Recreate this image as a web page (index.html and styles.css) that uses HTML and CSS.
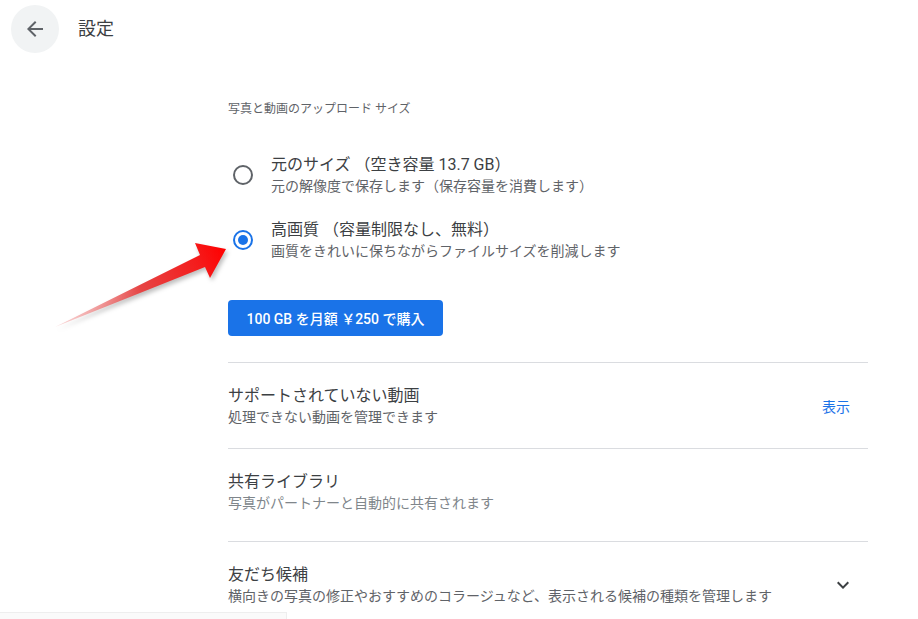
FILE: index.html
```html
<!DOCTYPE html>
<html lang="ja">
<head>
<meta charset="utf-8">
<title>設定</title>
<link rel="stylesheet" href="styles.css">
</head>
<body>
<header class="topbar">
  <button class="back" aria-label="戻る">
    <svg viewBox="0 0 24 24" width="24" height="24"><path d="M20 11H7.83l5.59-5.59L12 4l-8 8 8 8 1.41-1.41L7.83 13H20v-2z" fill="#5f6368"/></svg>
  </button>
  <h1 class="page-title">設定</h1>
</header>

<main class="content">
  <section class="upload">
    <div class="section-label">写真と動画のアップロード サイズ</div>
    <div class="radio-row first">
      <span class="radio"></span>
      <div class="texts">
        <div class="title">元のサイズ （空き容量 13.7 GB）</div>
        <div class="sub">元の解像度で保存します（保存容量を消費します）</div>
      </div>
    </div>
    <div class="radio-row second">
      <span class="radio checked"></span>
      <div class="texts">
        <div class="title">高画質 （容量制限なし、無料）</div>
        <div class="sub">画質をきれいに保ちながらファイルサイズを削減します</div>
      </div>
    </div>
    <button class="buy">100 GB を月額 ￥250 で購入</button>
  </section>

  <div class="setting">
    <div class="texts">
      <div class="title">サポートされていない動画</div>
      <div class="sub">処理できない動画を管理できます</div>
    </div>
    <span class="link">表示</span>
  </div>
  <div class="setting tall">
    <div class="texts">
      <div class="title">共有ライブラリ</div>
      <div class="sub light">写真がパートナーと自動的に共有されます</div>
    </div>
  </div>
  <div class="setting">
    <div class="texts">
      <div class="title">友だち候補</div>
      <div class="sub">横向きの写真の修正やおすすめのコラージュなど、表示される候補の種類を管理します</div>
    </div>
    <svg class="chev" viewBox="0 0 24 24" width="24" height="24"><path d="M7.41 8.59 12 13.17l4.59-4.58L18 10l-6 6-6-6 1.41-1.41z" fill="#3c4043"/></svg>
  </div>
</main>

<svg class="arrow" viewBox="0 0 190 100" width="190" height="100">
  <defs>
    <linearGradient id="ag" x1="5" y1="92" x2="175" y2="15" gradientUnits="userSpaceOnUse">
      <stop offset="0" stop-color="#f4b4b4" stop-opacity="0.5"/>
      <stop offset="0.5" stop-color="#e64545"/>
      <stop offset="0.85" stop-color="#f51a1a"/>
      <stop offset="1" stop-color="#ff0000"/>
    </linearGradient>
  </defs>
  <polygon points="5,92 150,20 145,8 176,14 160,43 155,32" fill="url(#ag)"/>
</svg>

<div class="corner-panel"></div>
</body>
</html>
```

FILE: styles.css
```css
* { box-sizing: border-box; }
html, body { margin: 0; padding: 0; background: #fff; }
body {
  width: 918px;
  height: 619px;
  overflow: hidden;
  font-family: "Roboto", "Noto Sans CJK JP", sans-serif;
  color: #3c4043;
  position: relative;
}

.topbar {
  display: flex;
  align-items: center;
  padding: 5px 11px;
  gap: 19px;
}
.back {
  width: 48px;
  height: 48px;
  border-radius: 50%;
  border: none;
  background: #f1f3f4;
  display: flex;
  align-items: center;
  justify-content: center;
  padding: 0;
}
.page-title {
  margin: 0;
  font-size: 18px;
  font-weight: 400;
  color: #3c4043;
  line-height: 24px;
}

.content {
  margin-left: 228px;
  width: 640px;
  padding-top: 43px;
}

.section-label {
  font-size: 12px;
  line-height: 16px;
  color: #5f6368;
}

.radio-row {
  display: flex;
  align-items: center;
}
.radio-row.first { margin-top: 37px; }
.radio-row.second { margin-top: 23px; }

.radio {
  width: 20px;
  height: 20px;
  border-radius: 50%;
  border: 2px solid #5f6368;
  margin-left: 5px;
  margin-right: 18px;
  flex: none;
  display: flex;
  align-items: center;
  justify-content: center;
}
.radio.checked { border-color: #1a73e8; }
.radio.checked::after {
  content: "";
  width: 10px;
  height: 10px;
  border-radius: 50%;
  background: #1a73e8;
}

.title {
  font-size: 16px;
  line-height: 22px;
  color: #3c4043;
}
.sub {
  font-size: 14px;
  line-height: 20px;
  color: #5f6368;
}
.sub.light { color: #80868b; }

.buy {
  margin-top: 39px;
  display: block;
  width: 215px;
  height: 36px;
  border: none;
  border-radius: 4px;
  background: #1a73e8;
  color: #fff;
  font-family: inherit;
  font-size: 14px;
  font-weight: 500;
  padding: 0;
}

.upload {
  padding-bottom: 26px;
  border-bottom: 1px solid #dadce0;
}

.setting {
  display: flex;
  align-items: center;
  justify-content: space-between;
  padding: 22px 0 21px;
  border-bottom: 1px solid #dadce0;
}
.setting.tall { padding-bottom: 28px; }
.setting:last-child { border-bottom: none; }

.link {
  font-size: 14px;
  color: #1a73e8;
  margin-right: 18px;
}
.chev { margin-right: 13px; flex: none; }

.arrow {
  position: absolute;
  left: 50px;
  top: 235px;
  filter: drop-shadow(2px 3px 2px rgba(0,0,0,0.25));
  pointer-events: none;
}

.corner-panel {
  position: absolute;
  left: 0;
  top: 612px;
  width: 287px;
  height: 20px;
  background: #fafafa;
  border-top: 1px solid #eeeeee;
  border-right: 1px solid #eeeeee;
}
```
